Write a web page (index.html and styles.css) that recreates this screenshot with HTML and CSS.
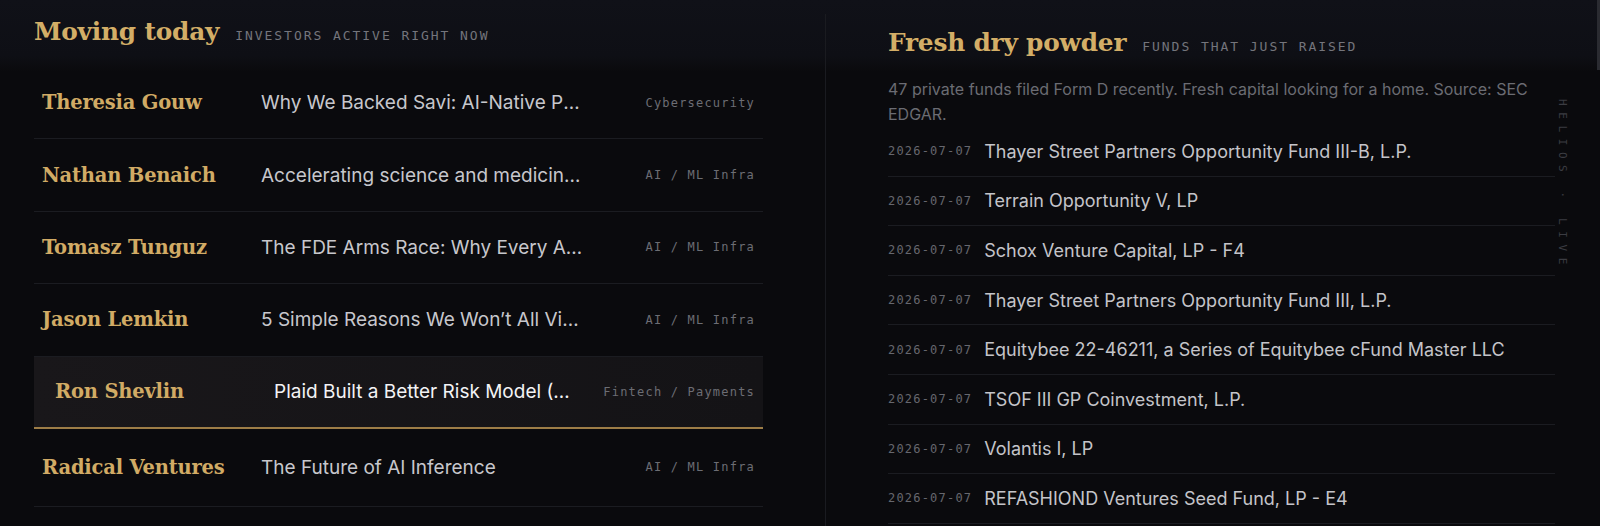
FILE: index.html
```html
<!DOCTYPE html>
<html lang="en">
<head>
<meta charset="utf-8">
<title>Helios · Live</title>
<link rel="stylesheet" href="styles.css">
</head>
<body>
<main class="board">
  <section class="col col-left">
    <header class="col-head">
      <h2 class="col-title">Moving today</h2>
      <span class="col-kicker">Investors active right now</span>
    </header>
    <ul class="movers">
      <li class="mover">
        <span class="mover-name">Theresia Gouw</span>
        <span class="mover-title">Why We Backed Savi: AI-Native Prevention for Modern Security Teams</span>
        <span class="mover-tag">Cybersecurity</span>
      </li>
      <li class="mover">
        <span class="mover-name">Nathan Benaich</span>
        <span class="mover-title">Accelerating science and medicine with AI-first companies</span>
        <span class="mover-tag">AI / ML Infra</span>
      </li>
      <li class="mover">
        <span class="mover-name">Tomasz Tunguz</span>
        <span class="mover-title">The FDE Arms Race: Why Every AI Company Is Hiring Engineers</span>
        <span class="mover-tag">AI / ML Infra</span>
      </li>
      <li class="mover">
        <span class="mover-name">Jason Lemkin</span>
        <span class="mover-title">5 Simple Reasons We Won’t All Vibe Code Our Own Software</span>
        <span class="mover-tag">AI / ML Infra</span>
      </li>
      <li class="mover is-active">
        <span class="mover-name">Ron Shevlin</span>
        <span class="mover-title">Plaid Built a Better Risk Model (And Banks Should Pay Attention)</span>
        <span class="mover-tag">Fintech / Payments</span>
      </li>
      <li class="mover">
        <span class="mover-name">Radical Ventures</span>
        <span class="mover-title">The Future of AI Inference</span>
        <span class="mover-tag">AI / ML Infra</span>
      </li>
    </ul>
  </section>

  <section class="col col-right">
    <header class="col-head">
      <h2 class="col-title">Fresh dry powder</h2>
      <span class="col-kicker">Funds that just raised</span>
    </header>
    <p class="col-note">47 private funds filed Form D recently. Fresh capital looking for a home. Source: SEC EDGAR.</p>
    <ul class="funds">
      <li class="fund"><span class="fund-date">2026-07-07</span><span class="fund-name">Thayer Street Partners Opportunity Fund III-B, L.P.</span></li>
      <li class="fund"><span class="fund-date">2026-07-07</span><span class="fund-name">Terrain Opportunity V, LP</span></li>
      <li class="fund"><span class="fund-date">2026-07-07</span><span class="fund-name">Schox Venture Capital, LP - F4</span></li>
      <li class="fund"><span class="fund-date">2026-07-07</span><span class="fund-name">Thayer Street Partners Opportunity Fund III, L.P.</span></li>
      <li class="fund"><span class="fund-date">2026-07-07</span><span class="fund-name">Equitybee 22-46211, a Series of Equitybee cFund Master LLC</span></li>
      <li class="fund"><span class="fund-date">2026-07-07</span><span class="fund-name">TSOF III GP Coinvestment, L.P.</span></li>
      <li class="fund"><span class="fund-date">2026-07-07</span><span class="fund-name">Volantis I, LP</span></li>
      <li class="fund"><span class="fund-date">2026-07-07</span><span class="fund-name">REFASHIOND Ventures Seed Fund, LP - E4</span></li>
    </ul>
  </section>

  <div class="live-mark">Helios · Live</div>
  <div class="scroll-thumb"></div>
</main>
</body>
</html>
```
FILE: styles.css
```css
html, body {
  margin: 0;
  padding: 0;
  height: 100%;
  overflow: hidden;
}

body {
  background: #0a0a0d;
  color: #c8c8cd;
  font-family: Inter, "Noto Sans", sans-serif;
}

ul {
  list-style: none;
  margin: 0;
  padding: 0;
}

.board {
  position: relative;
  display: grid;
  grid-template-columns: 825px 1fr;
  height: 526px;
  background: linear-gradient(180deg, #101118 0, #0e0f15 56px, #0a0a0d 72px);
}

/* ---------- column headers ---------- */
.col-head {
  display: flex;
  align-items: baseline;
  gap: 16px;
  height: 32px;
  line-height: 32px;
}

.col-title {
  margin: 0;
  font-family: "DejaVu Serif", "Liberation Serif", serif;
  font-weight: 700;
  font-size: 24.8px;
  letter-spacing: -0.2px;
  color: #d3ae67;
  white-space: nowrap;
}

.col-kicker {
  font-family: "DejaVu Sans Mono", "Liberation Mono", monospace;
  font-size: 13px;
  letter-spacing: 0.15em;
  text-transform: uppercase;
  color: #74757c;
  white-space: nowrap;
}

/* ---------- left: investors moving today ---------- */
.col-left {
  padding: 16px 62px 0 34px;
}

.col-left .col-head {
  margin-bottom: 19px;
}

.mover {
  display: grid;
  grid-template-columns: 205px 1fr 156px;
  column-gap: 14px;
  align-items: center;
  height: 71.4px;
  padding: 0 8px;
  border-bottom: 1px solid #1b1c21;
}

.mover:last-child {
  height: 77px;
}

.mover-name {
  font-family: "DejaVu Serif", "Liberation Serif", serif;
  font-weight: 700;
  font-size: 19.5px;
  letter-spacing: -0.2px;
  color: #d1ab65;
  white-space: nowrap;
}

.mover-title {
  font-size: 19px;
  color: #c7c7cc;
  white-space: nowrap;
  overflow: hidden;
  text-overflow: ellipsis;
}

.mover-tag {
  font-family: "DejaVu Sans Mono", "Liberation Mono", monospace;
  font-size: 12px;
  letter-spacing: 0.1em;
  color: #6c6d74;
  text-align: right;
  white-space: nowrap;
}

/* selected row: warm panel with a gold rule underneath */
.mover.is-active {
  grid-template-columns: 205px 1fr 164px;
  height: 70.4px;
  padding-left: 21px;
  background: linear-gradient(90deg, #19171a 0%, #141316 100%);
  border-bottom: 2px solid #9d7d47;
}

.mover.is-active .mover-title {
  color: #f3f3f5;
}

/* ---------- right: fresh funds ---------- */
.col-right {
  margin-top: 14px;
  padding: 13px 45px 0 62px;
  border-left: 1px solid #1a1b20;
}

.col-note {
  margin: 18px 0 0;
  font-size: 16px;
  line-height: 25px;
  color: #6b6c73;
}

.fund {
  display: flex;
  align-items: center;
  gap: 12px;
  height: 48.6px;
  border-bottom: 1px solid #1b1c21;
  white-space: nowrap;
}

.fund-date {
  font-family: "DejaVu Sans Mono", "Liberation Mono", monospace;
  font-size: 12px;
  letter-spacing: 0.1em;
  color: #66676e;
}

.fund-name {
  font-size: 18px;
  color: #c4c4c9;
}

/* ---------- overlays ---------- */
.live-mark {
  position: absolute;
  top: 99px;
  right: 31px;
  writing-mode: vertical-rl;
  font-family: "DejaVu Sans Mono", "Liberation Mono", monospace;
  font-size: 11px;
  letter-spacing: 0.6em;
  text-transform: uppercase;
  color: #3b3c42;
}

.scroll-thumb {
  position: absolute;
  top: 0;
  right: 0;
  width: 3px;
  height: 70px;
  background: #2a2b31;
}
```
